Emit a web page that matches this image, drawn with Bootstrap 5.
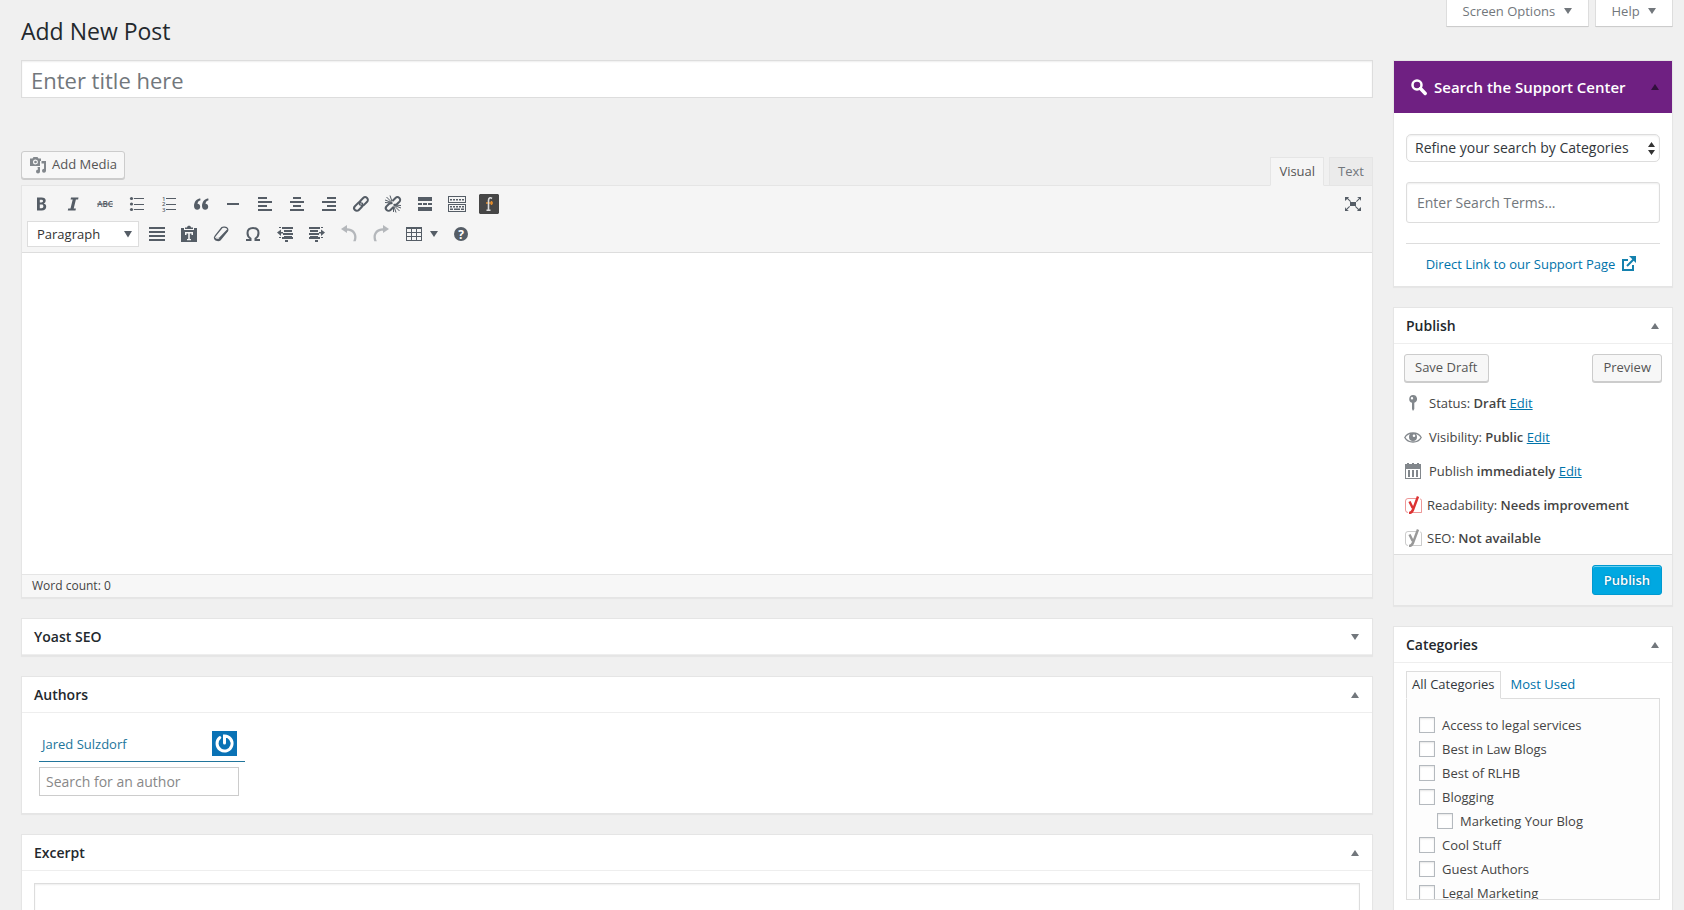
<!DOCTYPE html>
<html lang="en">
<head>
<meta charset="utf-8">
<meta name="viewport" content="width=device-width, initial-scale=1">
<title>Add New Post</title>
<link href="https://cdn.jsdelivr.net/npm/bootstrap@5.3.0/dist/css/bootstrap.min.css" rel="stylesheet">
<style>
:root{--line:#e2e2e2;--ink:#23282d;--icon:#555d66;--blue:#0073aa;--soft:#f5f5f5}
body{background:#f0f0f0;color:#444;font:13px/18px "Open Sans",sans-serif}
a{color:var(--blue)}
svg{display:block;flex:none}
.screen{padding:0 11px 0 21px}
.main-col{min-width:0}
.side-col{width:280px}
.screen-links{gap:6px;height:27px}
.screen-links button{background:#fff;border:1px solid #ddd;border-top:0;border-bottom-color:#ccc;color:#72777c;padding:0 16px 4px;box-shadow:0 1px 1px -1px rgba(0,0,0,.1)}
.caret-dn,.caret-up{display:inline-block;width:0;height:0;border:4px solid transparent}
.caret-dn{border-top:6px solid currentColor;border-bottom:0}
.caret-up{border-bottom:6px solid currentColor;border-top:0}
.screen-links .caret-dn{margin-left:5px;vertical-align:2px}
h1{font-size:23px;line-height:29px;color:var(--ink);padding:17px 0 14px}
.top-row{height:60px}
.field{border:1px solid #ddd;border-radius:0;box-shadow:inset 0 1px 2px rgba(0,0,0,.07);color:#32373c}
.field::placeholder{color:#72777c;opacity:1}
.title-field{font-size:22px;line-height:30px;padding:4px 9px 2px;height:38px}
.wp-button{background:#f7f7f7;border:1px solid #ccc;border-radius:3px;box-shadow:0 1px 0 #ccc;color:#555;font-size:13px;line-height:25px;padding:0 10px 1px;height:28px}
.wp-primary{background:#00a8e1;border-color:#0099d0;box-shadow:inset 0 1px 0 #6ccff0;color:#fff;font-weight:600;padding:0 11px;height:30px;text-shadow:0 0 2px #006799}
.media-button{padding:0 7px 1px 6px;gap:4px}
.editor-head{margin-top:53px;height:35px}
.mode-tab{height:29px;border:1px solid #e5e5e5;background:#ebebeb;color:#72777c;padding:0 8px 2px}
.mode-tab.on{background:var(--soft);border-bottom-color:var(--soft);color:#555;position:relative}
.editor{border:1px solid #e5e5e5;background:#fff;margin-top:-1px;box-shadow:0 1px 1px rgba(0,0,0,.04)}
.tools{background:var(--soft);border-bottom:1px solid #ddd;padding:3px 3px 4px;height:67px}
.tool{background:none;border:0;padding:0;width:32px;height:30px;display:flex;align-items:center;justify-content:center;color:var(--icon)}
.tool svg{fill:currentColor}
.tool-row{height:30px}
.block-select{width:112px;height:26px;border:1px solid #ddd;border-radius:0;font-size:13px;line-height:18px;padding:3px 24px 3px 9px;margin:0 2px;color:#333;background:#fff url("data:image/svg+xml,%3Csvg xmlns='http://www.w3.org/2000/svg' width='8' height='7'%3E%3Cpath d='M0 0h8L4 6.500z' fill='%23555d66'/%3E%3C/svg%3E") no-repeat right 6px center/8px 7px}
.writing{height:321px;border:0;resize:none;outline:0;padding:10px;border-radius:0}
.word-bar{border-top:1px solid #e5e5e5;background:#f7f7f7;font-size:12px;line-height:21px;height:23px;padding:0 10px}
.postbox{background:#fff;border:1px solid #e5e5e5;box-shadow:0 1px 1px rgba(0,0,0,.04);margin-bottom:20px}
.box-head{height:36px;padding:0 13px 0 12px;border-bottom:1px solid #eee;color:#72777c}
.box-head h2{font-size:14px;line-height:20px;font-weight:600;color:var(--ink);margin:0}
.box-head button{background:none;border:0;padding:0;color:inherit;display:flex}
.support-head{background:#6f2082;height:52px;padding:0 13px 1px 17px;border:0;color:#32103d}
.support-head h2{color:#fff;font-size:15px;line-height:22px;font-weight:600;gap:7px}
.support-body{padding:21px 12px 13px}
.refine{height:28px;border:1px solid #ddd;border-radius:5px;font-size:14px;line-height:20px;padding:3px 24px 3px 8px;color:#32373c;background:#fff url("data:image/svg+xml,%3Csvg xmlns='http://www.w3.org/2000/svg' width='7' height='13'%3E%3Cpath d='M0 5h7L3.500 0zM0 8h7l-3.500 5z' fill='%23333'/%3E%3C/svg%3E") no-repeat right 4px center/7px 13px}
.terms{height:41px;border-radius:3px;font-size:14px;padding:0 10px;margin:20px 0}
.support-link{border-top:1px solid #ddd;padding:11px 3px 0 0}
.support-link a{gap:6px}
.publish-body{padding:10px 10px 0}
.meta{height:34px;gap:7px}
.meta strong{font-weight:600}
.meta svg{width:18px}
.yoast{gap:5px}
.yoast-last{height:32px;padding-bottom:1px}
.publish-foot{background:var(--soft);border-top:1px solid #ddd;padding:10px;height:51px}
.cat-tab{border:1px solid #ddd;border-bottom-color:#fdfdfd;background:#fdfdfd;color:#32373c;height:28px;padding:3px 6px 3px 5px;position:relative}
.cat-panel{border:1px solid #ddd;background:#fdfdfd;height:202px;overflow:hidden;padding:14px 12px;margin-top:-1px}
.cat-panel label{height:24px;gap:7px}
.cat-panel .form-check-input{width:16px;height:16px;margin:0;border:1px solid #b4b9be;border-radius:0;box-shadow:inset 0 1px 2px rgba(0,0,0,.1)}
.author-row{border-bottom:1px solid #21759b;width:206px;height:31px;padding:0 8px 5px 3px}
.author-row a{color:#21759b}
.author-field{width:200px;height:29px;border:1px solid #ccc;border-radius:0;font-size:14px;padding:0 6px;margin-top:5px}
.author-field::placeholder{color:#888;opacity:1}
</style>
</head>
<body>
<div class="screen vh-100 overflow-hidden">
  <header class="top-row d-flex justify-content-between align-items-start">
    <h1 class="m-0 fw-normal">Add New Post</h1>
    <div class="screen-links d-flex">
      <button type="button">Screen Options <span class="caret-dn"></span></button>
      <button type="button">Help <span class="caret-dn"></span></button>
    </div>
  </header>

  <div class="d-flex" style="gap:20px">
    <main class="main-col flex-grow-1">
      <input class="field title-field w-100 d-block" type="text" aria-label="Title" placeholder="Enter title here">

      <div class="editor-head d-flex justify-content-between">
        <button type="button" class="wp-button media-button d-flex align-items-center">
          <svg width="20" height="20" viewBox="0 0 20 20" fill="#82878c"><path fill-rule="evenodd" d="M2 3.500h2.500L5.500 2h4l1 1.500H13V6h-1v5H2zM7.500 4.500a2.500 2.500 0 1 0 0 5 2.500 2.500 0 0 0 0-5z"/><circle cx="7.500" cy="7" r="1.300"/><path d="M13.500 6H18v10a2 2 0 1 1-2-2.200V8.500h-2.500zM9.500 12H12v4.500a2 2 0 1 1-2-2z"/></svg>
          Add Media
        </button>
        <div class="d-flex align-items-end" role="tablist">
          <button type="button" class="mode-tab on" role="tab">Visual</button>
          <button type="button" class="mode-tab" style="margin-left:5px" role="tab">Text</button>
        </div>
      </div>

      <section class="editor">
        <div class="tools">
          <div class="tool-row d-flex">
            <button class="tool" type="button" aria-label="Bold"><svg width="20" height="20" viewBox="0 0 20 20"><path fill-rule="evenodd" d="M6 3.500h4.600c2.700 0 4.100 1 4.100 3.100 0 1.500-.8 2.600-2 2.900 1.600.4 2.500 1.400 2.500 3.200 0 2.400-1.700 3.800-4.400 3.800H6zM8.800 5.700v2.800h1.500c1.100 0 1.700-.4 1.700-1.400s-.6-1.400-1.800-1.400zm0 4.900v3.600h1.700c1.200 0 1.900-.6 1.900-1.900s-.8-1.700-2-1.700z"/></svg></button>
            <button class="tool" type="button" aria-label="Italic"><svg width="20" height="20" viewBox="0 0 20 20"><path d="M8 3.500h7.500l-.4 1.900h-2.200L10.700 14.600h2.200l-.4 1.900H4.800l.4-1.900h2.300L9.700 5.400H7.600z"/></svg></button>
            <button class="tool" type="button" aria-label="Strikethrough"><svg width="20" height="20" viewBox="0 0 20 20"><text x="10" y="13" text-anchor="middle" font-family="Open Sans" font-size="8" font-weight="600">ABC</text><path d="M2 9.500h16v1H2z"/></svg></button>
            <button class="tool" type="button" aria-label="Bulleted list"><svg width="20" height="20" viewBox="0 0 20 20"><circle cx="4.500" cy="4.500" r="1.600"/><circle cx="4.500" cy="10" r="1.600"/><circle cx="4.500" cy="15.500" r="1.600"/><path d="M7 4h10v1H7zM7 10h10v1H7zM7 15h10v1H7z"/></svg></button>
            <button class="tool" type="button" aria-label="Numbered list"><svg width="20" height="20" viewBox="0 0 20 20"><g font-family="Open Sans" font-size="6" font-weight="600"><text x="3" y="6.500">1</text><text x="3" y="12">2</text><text x="3" y="17.500">3</text></g><path d="M7 4h10v1H7zM7 10h10v1H7zM7 15h10v1H7z"/></svg></button>
            <button class="tool" type="button" aria-label="Blockquote"><svg width="20" height="20" viewBox="0 0 20 20"><path d="M9.300 4.400C6.800 4.400 3 6.700 3 12c0 2.300 1.300 3.700 3.200 3.700 1.700 0 3-1.200 3-3s-1.200-3-2.700-3c.2-2 1.600-3.200 3-3.500zM17.300 4.400c-2.500 0-6.300 2.300-6.300 7.600 0 2.300 1.300 3.700 3.200 3.700 1.700 0 3-1.200 3-3s-1.200-3-2.700-3c.2-2 1.600-3.200 3-3.500z"/></svg></button>
            <button class="tool" type="button" aria-label="Horizontal line"><svg width="20" height="20" viewBox="0 0 20 20"><path d="M4 9h12v2H4z"/></svg></button>
            <button class="tool" type="button" aria-label="Align left"><svg width="20" height="20" viewBox="0 0 20 20"><path d="M3 3h9v2H3zM3 7h14v2H3zM3 11h9v2H3zM3 15h14v2H3z"/></svg></button>
            <button class="tool" type="button" aria-label="Align center"><svg width="20" height="20" viewBox="0 0 20 20"><path d="M6 3h8v2H6zM3 7h14v2H3zM6 11h8v2H6zM3 15h14v2H3z"/></svg></button>
            <button class="tool" type="button" aria-label="Align right"><svg width="20" height="20" viewBox="0 0 20 20"><path d="M8 3h9v2H8zM3 7h14v2H3zM8 11h9v2H8zM3 15h14v2H3z"/></svg></button>
            <button class="tool" type="button" aria-label="Insert link"><svg width="20" height="20" viewBox="0 0 20 20"><g fill="none" stroke="currentColor" stroke-width="2" stroke-linecap="round"><path d="M8.800 10.500a2.600 2.600 0 0 1 .2-3.200l3.200-3.300a2.700 2.700 0 0 1 3.900 3.800l-3.300 3.300c-.7.700-1.500.9-2.400.7"/><path d="M11.200 9.500a2.600 2.600 0 0 1-.2 3.200L7.800 16a2.700 2.700 0 0 1-3.900-3.800l3.300-3.300c.7-.7 1.500-.9 2.400-.7"/></g></svg></button>
            <button class="tool" type="button" aria-label="Remove link"><svg width="20" height="20" viewBox="0 0 20 20"><g fill="none" stroke="currentColor" stroke-width="2"><path d="M9.500 7l3-3a2.700 2.700 0 0 1 3.900 3.800L13.500 10.500l-3 .5M10.500 13l-3 3a2.700 2.700 0 0 1-3.900-3.800L6.500 9.500l3-.5"/><path stroke-width="1" d="M8.500 8.500L2 6M8.500 8L3.500 3M9 7.500L7 1.500M11.500 11.500L18 14M11.500 12l5 5M11 12.500l2 6M11.500 11l6.500.500M10.500 12.500v5.500M8.500 9L2 8.500"/></g></svg></button>
            <button class="tool" type="button" aria-label="Read more"><svg width="20" height="20" viewBox="0 0 20 20"><path d="M3 3h14v4H3zM3 9h4v2H3zM8 9h4v2H8zM13 9h4v2h-4zM3 13h14v4H3z"/></svg></button>
            <button class="tool" type="button" aria-label="Toolbar toggle"><svg width="20" height="20" viewBox="0 0 20 20"><path fill-rule="evenodd" d="M1 2h18v7H1zM2 3v5h16V3zM1 10h18v8H1zM2 11v6h16v-6z"/><path d="M3 5h2v1.500H3zM6 5h2v1.500H6zM9 5h2v1.500H9zM12 5h2v1.500h-2zM15 5h2v1.500h-2zM3 12h2v1.500H3zM6 12h2v1.500H6zM9 12h2v1.500H9zM12 12h2v1.500h-2zM15 12h2v1.500h-2zM3 14.500h3V16H3zM7 14.500h6V16H7zM14 14.500h3V16h-3z"/></svg></button>
            <button class="tool" type="button" aria-label="Embed"><svg width="20" height="20" viewBox="0 0 20 20"><path fill="#464646" d="M1 0h18l1 1v18l-1 1H1l-1-1V1z"/><path fill="none" stroke="#e08a2a" stroke-width="1.500" d="M7 9h7M12.500 7v4"/><path fill="none" stroke="#ddd" stroke-width="1.600" d="M13 4.500c-2-1.500-3.500-.5-3.500 2V16M7.500 16.300h4"/></svg></button>
            <button class="tool ms-auto" type="button" aria-label="Distraction-free writing"><svg width="20" height="20" viewBox="0 0 20 20"><path d="M7 8h6v4H7zM2 3h4L5 4.300l3 3-.7.700-3.100-3L2 7zM18 3v4l-1.200-2-3.100 3-.7-.7 3-3L14 3zM2 17v-4l1.200 2 3.100-3 .7.700-3 3L6 17zM18 17h-4l1-1.300-3-3 .7-.7 3.100 3L18 13z"/></svg></button>
          </div>
          <div class="tool-row d-flex align-items-center">
            <select class="form-select block-select" aria-label="Format"><option>Paragraph</option></select>
            <button class="tool" type="button" aria-label="Justify"><svg width="20" height="20" viewBox="0 0 20 20"><path d="M2 3h16v2H2zM2 7h16v2H2zM2 11h16v2H2zM2 15h16v2H2z"/></svg></button>
            <button class="tool" type="button" aria-label="Paste as text"><svg width="20" height="20" viewBox="0 0 20 20"><path fill-rule="evenodd" d="M2 4h3v2h10V4h3v14H2zM6 8v3h1.500V9.500h1.700V15H8v1.200h4V15h-1.200V9.500h1.700V11H14V8z"/><path fill-rule="evenodd" d="M6 5V3.500h2C8 1.200 12 1.200 12 3.500h2V5z"/></svg></button>
            <button class="tool" type="button" aria-label="Clear formatting"><svg width="20" height="20" viewBox="0 0 20 20"><path fill="none" stroke="currentColor" stroke-width="1.300" stroke-linejoin="round" d="M11 3.500c1-.8 4.500-.6 5.500 1 .5.800.3 2-.2 2.700L9 16c-1 .8-4.200.8-5.200-1-.5-.8-.2-2.200.3-2.800z"/><path d="M3.800 12.500c1.200 1.300 3.600 1.500 5 .6L16.500 5v2.500L9 16c-2 .8-5 .3-5.500-1.500l1-.5c1 1 2.500 1 3.500.5l.5-1c-1.500.500-3.500.300-4.700-1z"/></svg></button>
            <button class="tool" type="button" aria-label="Special character"><svg width="20" height="20" viewBox="0 0 20 20"><path fill="none" stroke="currentColor" stroke-width="2" d="M3 16h4.500v-1.500C5.500 13.200 4.500 11.300 4.500 9c0-3 2.200-5 5.500-5s5.500 2 5.500 5c0 2.300-1 4.200-3 5.500V16H17"/></svg></button>
            <button class="tool" type="button" aria-label="Decrease indent"><svg width="20" height="20" viewBox="0 0 20 20"><path d="M4 3h2v1H4zM7 3h11v2H7zM9 6h8v2H9zM8 9h10v2H8zM9 12h8v2H9zM4 13h2v1H4zM7 13h11v2H7zM10 16h3v2h-3zM2 8.500L6 5.500V8h2v1.500H6V12z"/></svg></button>
            <button class="tool" type="button" aria-label="Increase indent"><svg width="20" height="20" viewBox="0 0 20 20"><path d="M14 3h2v1h-2zM2 3h11v2H2zM3 6h8v2H3zM2 9h10v2H2zM3 12h8v2H3zM14 13h2v1h-2zM2 13h11v2H2zM8 16h3v2H8zM18 8.500l-4-3V8h-2v1.500h2V12z"/></svg></button>
            <button class="tool" type="button" aria-label="Undo" style="opacity:.4"><svg width="20" height="20" viewBox="0 0 20 20"><path d="M8 1v3.200c6 0 9.500 4 9.500 8.800 0 1.500-.3 3-.8 4.200h-2.500c.6-1.200 1-2.600 1-4C15.200 9.500 12.500 6.800 8 6.800V9L2 5z"/></svg></button>
            <button class="tool" type="button" aria-label="Redo" style="opacity:.4"><svg width="20" height="20" viewBox="0 0 20 20"><path d="M12 1v3.200C6 4.200 2.500 8.200 2.500 13c0 1.500.3 3 .8 4.200h2.500c-.6-1.200-1-2.600-1-4 0-3.700 2.700-6.400 7.200-6.400V9l6-4z"/></svg></button>
            <button class="tool" type="button" aria-label="Table" style="width:48px"><svg width="20" height="20" viewBox="0 0 20 20"><path fill-rule="evenodd" d="M2 3h16v14H2zM3 5v3h4V5zM8 5v3h4V5zM13 5v3h4V5zM3 9v3h4V9zM8 9v3h4V9zM13 9v3h4V9zM3 13v3h4v-3zM8 13v3h4v-3zM13 13v3h4v-3z"/></svg><span class="caret-dn" style="margin-left:6px"></span></button>
            <button class="tool" type="button" aria-label="Keyboard shortcuts"><svg width="20" height="20" viewBox="0 0 20 20"><circle cx="10" cy="10" r="7"/><text x="10" y="14.500" text-anchor="middle" font-family="Open Sans" font-size="12" font-weight="700" fill="#fff">?</text></svg></button>
          </div>
        </div>
        <textarea class="writing w-100 d-block" aria-label="Post content"></textarea>
        <div class="word-bar">Word count: 0</div>
      </section>

      <section class="postbox" style="margin-top:20px">
        <div class="box-head d-flex align-items-center justify-content-between"><h2>Yoast SEO</h2><button type="button" aria-label="Expand Yoast SEO"><span class="caret-dn"></span></button></div>
      </section>

      <section class="postbox">
        <div class="box-head d-flex align-items-center justify-content-between"><h2>Authors</h2><button type="button" aria-label="Collapse Authors"><span class="caret-up"></span></button></div>
        <div style="padding:18px 17px 17px">
          <div class="author-row d-flex align-items-center justify-content-between">
            <a class="text-decoration-none" href="#">Jared Sulzdorf</a>
            <svg width="25" height="25" viewBox="0 0 25 25"><path fill="#0a72b5" d="M0 0h25v25H0z"/><path fill="none" stroke="#fff" stroke-width="3" stroke-linecap="round" d="M7.800 6.700a7.500 7.500 0 1 0 4.700-1.700v7"/></svg>
          </div>
          <input class="author-field d-block" type="text" aria-label="Search for an author" placeholder="Search for an author">
        </div>
      </section>

      <section class="postbox">
        <div class="box-head d-flex align-items-center justify-content-between"><h2>Excerpt</h2><button type="button" aria-label="Collapse Excerpt"><span class="caret-up"></span></button></div>
        <div style="padding:12px"><textarea class="field d-block w-100" rows="3" aria-label="Excerpt"></textarea></div>
      </section>
    </main>

    <aside class="side-col flex-shrink-0">
      <section class="postbox">
        <div class="box-head support-head d-flex align-items-center justify-content-between">
          <h2 class="d-flex align-items-center"><svg width="16" height="18" viewBox="0 0 16 18"><circle cx="6" cy="7" r="4.500" fill="none" stroke="#fff" stroke-width="2.500"/><path d="M9.500 10.500l4.700 5" stroke="#fff" stroke-width="3.400" stroke-linecap="round"/></svg>Search the Support Center</h2>
          <button type="button" aria-label="Collapse search"><span class="caret-up"></span></button>
        </div>
        <div class="support-body">
          <select class="form-select refine field" aria-label="Category"><option>Refine your search by Categories</option></select>
          <input class="field terms w-100 d-block" type="text" aria-label="Search terms" placeholder="Enter Search Terms...">
          <div class="support-link d-flex justify-content-center align-items-center">
            <a class="text-decoration-none d-flex align-items-center" href="#">Direct Link to our Support Page
              <svg width="16" height="16" viewBox="0 0 16 16" fill="none" stroke="#1481ae" stroke-width="2"><path d="M7 4H2v10h10V9"/><path d="M6 10l7.500-7.500"/><path fill="#1481ae" stroke="none" d="M8 0h7v7l-2.300-2.300L10.300 2.300z"/></svg></a>
          </div>
        </div>
      </section>

      <section class="postbox">
        <div class="box-head d-flex align-items-center justify-content-between"><h2>Publish</h2><button type="button" aria-label="Collapse Publish"><span class="caret-up"></span></button></div>
        <div class="publish-body">
          <div class="d-flex justify-content-between mb-1">
            <button type="button" class="wp-button">Save Draft</button>
            <button type="button" class="wp-button">Preview</button>
          </div>
          <div class="meta d-flex align-items-center"><svg height="18" viewBox="0 0 18 18" fill="#82878c"><path fill-rule="evenodd" d="M9 1a4 4 0 0 1 1.300 7.800V15L9 17l-1-2V8.800A4 4 0 0 1 9 1zm-1 2a1.200 1.200 0 1 0 0 2.400A1.200 1.200 0 0 0 8 3z"/></svg><span>Status: <strong>Draft</strong> <a href="#">Edit</a></span></div>
          <div class="meta d-flex align-items-center"><svg height="18" viewBox="0 0 18 18" fill="#82878c"><path fill="none" stroke="#82878c" stroke-width="1.300" d="M.8 9.500C4 3.500 14 3.500 17.200 9.500c-3.200 6-13.200 6-16.400 0z"/><path fill-rule="evenodd" d="M9 5a4 4 0 1 1 0 8 4 4 0 0 1 0-8zm1 1.500a1.300 1.300 0 1 0 0 2.600 1.300 1.300 0 0 0 0-2.600z"/></svg><span>Visibility: <strong>Public</strong> <a href="#">Edit</a></span></div>
          <div class="meta d-flex align-items-center"><svg height="18" viewBox="0 0 18 18" fill="#82878c"><path fill-rule="evenodd" d="M1 2h2V1h2v1h3V1h2v1h3V1h2v1h2v15H1zM2 7v9h14V7z"/><path d="M4 8h2v7H4zM8 8h2v7H8zM12 8h2v7h-2z"/></svg><span>Publish <strong>immediately</strong> <a href="#">Edit</a></span></div>
          <div class="meta yoast d-flex align-items-center"><svg height="18" viewBox="0 0 18 18" fill="none" stroke="#dc3232"><path stroke-opacity=".5" d="M12 2.500H4A2.500 2.500 0 0 0 1.500 5v9A2.500 2.500 0 0 0 4 16.500M8 16.500h9.500V5c0-1-.5-2-1.500-2.300"/><path stroke-width="2.400" d="M5.500 5.500l3.200 6.500M14 .5L9.500 12.500C8.500 15.500 7.500 17 5 17"/></svg><span>Readability: <strong>Needs improvement</strong></span></div>
          <div class="meta yoast yoast-last d-flex align-items-center"><svg height="18" viewBox="0 0 18 18" fill="none" stroke="#999"><path stroke-opacity=".5" d="M12 2.500H4A2.500 2.500 0 0 0 1.500 5v9A2.500 2.500 0 0 0 4 16.500M8 16.500h9.500V5c0-1-.5-2-1.500-2.300"/><path stroke-width="2.400" d="M5.500 5.500l3.200 6.500M14 .5L9.500 12.500C8.500 15.500 7.500 17 5 17"/></svg><span>SEO: <strong>Not available</strong></span></div>
        </div>
        <div class="publish-foot d-flex justify-content-end"><button type="button" class="wp-button wp-primary">Publish</button></div>
      </section>

      <section class="postbox">
        <div class="box-head d-flex align-items-center justify-content-between"><h2>Categories</h2><button type="button" aria-label="Collapse Categories"><span class="caret-up"></span></button></div>
        <div style="padding:8px 12px 16px">
          <div class="d-flex align-items-start" style="gap:9px">
            <a class="cat-tab text-decoration-none" href="#">All Categories</a>
            <a class="text-decoration-none pt-1" href="#">Most Used</a>
          </div>
          <div class="cat-panel">
            <label class="d-flex align-items-center"><input class="form-check-input" type="checkbox">Access to legal services</label>
            <label class="d-flex align-items-center"><input class="form-check-input" type="checkbox">Best in Law Blogs</label>
            <label class="d-flex align-items-center"><input class="form-check-input" type="checkbox">Best of RLHB</label>
            <label class="d-flex align-items-center"><input class="form-check-input" type="checkbox">Blogging</label>
            <label class="d-flex align-items-center" style="padding-left:18px"><input class="form-check-input" type="checkbox">Marketing Your Blog</label>
            <label class="d-flex align-items-center"><input class="form-check-input" type="checkbox">Cool Stuff</label>
            <label class="d-flex align-items-center"><input class="form-check-input" type="checkbox">Guest Authors</label>
            <label class="d-flex align-items-center"><input class="form-check-input" type="checkbox">Legal Marketing</label>
          </div>
        </div>
      </section>
    </aside>
  </div>
</div>
<script src="https://cdn.jsdelivr.net/npm/bootstrap@5.3.0/dist/js/bootstrap.bundle.min.js"></script>
</body>
</html>
